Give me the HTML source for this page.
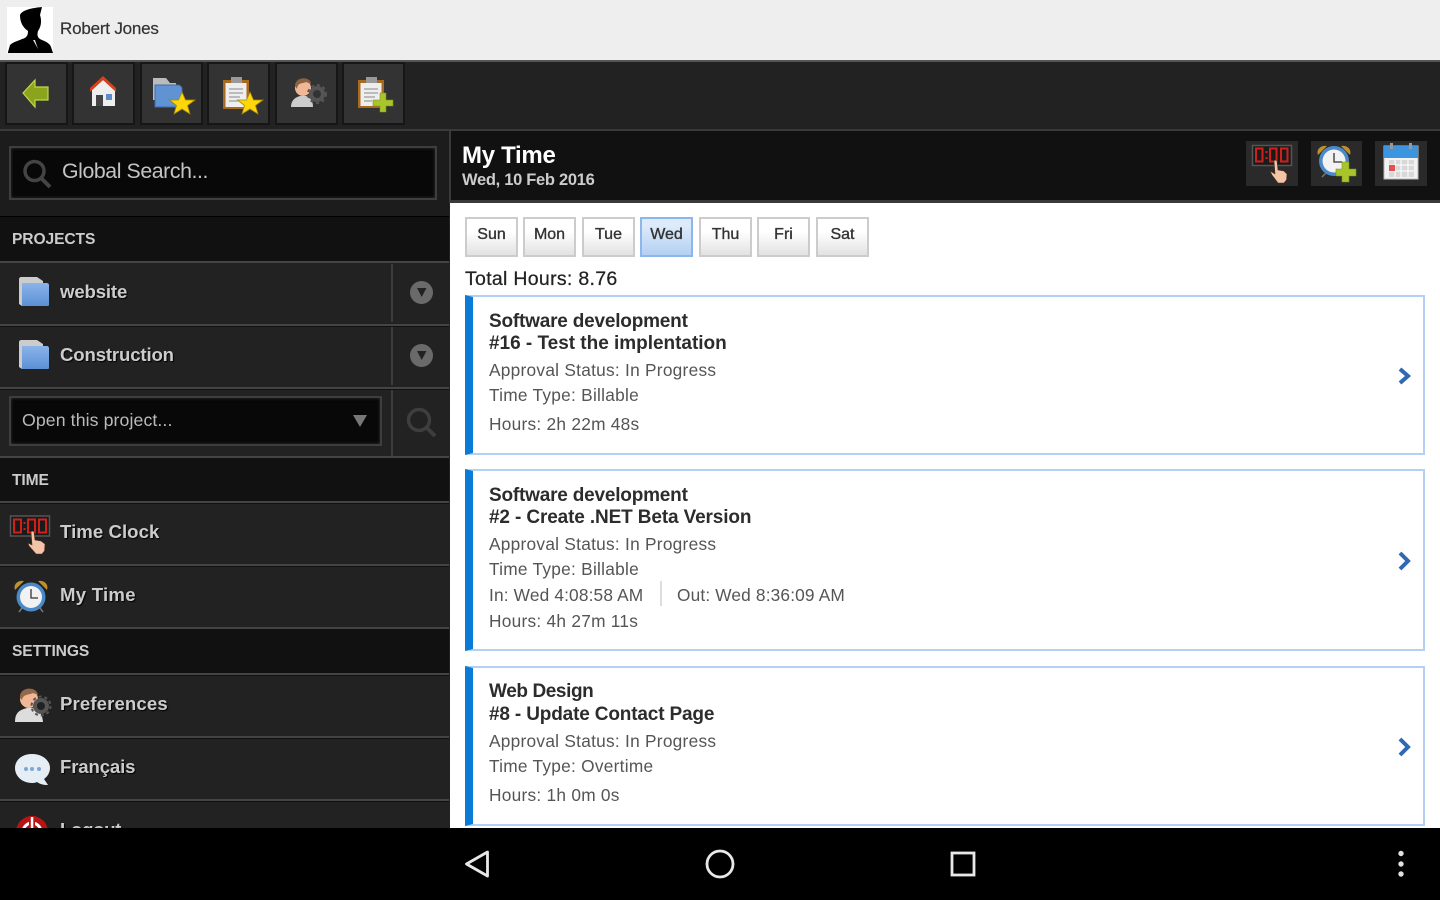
<!DOCTYPE html>
<html><head><meta charset="utf-8"><style>
*{box-sizing:border-box}
html,body{margin:0;padding:0;width:1440px;height:900px;overflow:hidden;background:#000;font-family:"Liberation Sans",sans-serif}
.a{position:absolute}
.t{position:absolute;white-space:nowrap;line-height:1}
.btn{position:absolute;top:62px;width:63px;height:63px;background:#333;border:2px solid #161616}
.lbl{position:absolute;left:60px;color:#ccc;font-weight:bold;font-size:18.6px;line-height:1;white-space:nowrap;text-shadow:1px 1px 1px #000;letter-spacing:-.15px}
.sec{position:absolute;left:12px;color:#ccc;font-weight:bold;font-size:15.6px;line-height:1;white-space:nowrap;letter-spacing:-.1px}
.day{position:absolute;top:217px;width:53px;height:40px;border:2px solid #ccc;background:linear-gradient(#fff 35%,#e2e2e2);text-align:center;font-size:16px;line-height:31px;color:#333;-webkit-text-stroke:.35px #333}
.card{position:absolute;left:465px;width:960px;background:#fff;border:2px solid #b4d0f5;border-left:8px solid #0a7bd6}
.c1{position:absolute;left:489px;font-size:19px;color:#2c2c2c;font-weight:bold;white-space:nowrap;line-height:1;letter-spacing:-.2px}
.c2{position:absolute;left:489px;font-size:17.3px;color:#555;white-space:nowrap;line-height:1;letter-spacing:.26px}
.sep{position:absolute;left:0;width:449px;height:3px;background:linear-gradient(#444 66%,#111 66%)}
.inp{position:absolute;background:#080808;border:2px solid #3e3e3e;box-shadow:inset 0 0 3px #333}
svg{position:absolute;overflow:visible}
</style></head><body>

<div class="a" style="left:0;top:0;width:1440px;height:60px;background:#eee"></div>
<div class="a" style="left:0;top:60px;width:1440px;height:2px;background:#555"></div>
<svg style="left:7px;top:7px" width="46" height="46" viewBox="0 0 46 46"><rect width="46" height="46" fill="#fff"/><path d="M1 45L3 38C6 35 11 34 15 32C19 31 21 29 21 24C15 20 13 14 13 8C15 3 25 1 35 0L33 8C35 14 34 20 31 24C30 28 30 31 35 33C40 35 43 37 44 40L46 46H1Z" fill="#000"/><path d="M26 33L31 42L28 33Z" fill="#ddd"/></svg>
<div class="t" style="left:60px;top:20px;font-size:17px;color:#333;-webkit-text-stroke:.2px #333;letter-spacing:-.2px">Robert Jones</div>

<div class="a" style="left:0;top:62px;width:1440px;height:68px;background:#222"></div>
<div class="a" style="left:0;top:129px;width:1440px;height:2px;background:#3a3a3a"></div>
<div class="btn" style="left:5px"></div><div class="btn" style="left:72px"></div><div class="btn" style="left:140px"></div><div class="btn" style="left:207px"></div><div class="btn" style="left:275px"></div><div class="btn" style="left:342px"></div>

<svg style="left:0;top:0" width="420" height="130">
<path d="M23 93L35 80V87H48V100H35V107Z" fill="#8aa51c" stroke="#c4d64e" stroke-width="1.2"/>
<path d="M92 90V106H115V90L103 80Z" fill="#eee"/><path d="M90 92V88L103 76L116 88V92L103 80Z" fill="#d8401c"/><rect x="96" y="95" width="7" height="11" fill="#444"/><rect x="106" y="94" width="6" height="6" fill="#5e8cc8"/>
<path d="M153 78H166L170 83H176V100H153Z" fill="#bbb"/><path d="M155 85H178C180 85 181 86 182 88V107H155Z" fill="#5f93d3" stroke="#3f6ea8"/>
<path d="M182 92L185.500 100H195L187.500 105.500L190 114L182 109L174 114L176.500 105.500L169.500 100H178.500Z" fill="#ffd60a" stroke="#a08a10" stroke-width=".8"/>
<rect x="223" y="80" width="26" height="29" fill="#a86a1e"/><rect x="225.500" y="83" width="21" height="24" fill="#eee"/><rect x="231" y="77" width="11" height="6" fill="#999"/><path d="M229 89H243M229 93H243M229 97H240M229 101H238" stroke="#aaa" stroke-width="1.500"/>
<path d="M250 92L253.500 100H263L255.500 105.500L258 114L250 109L242 114L244.500 105.500L237.500 100H246.500Z" fill="#ffd60a" stroke="#a08a10" stroke-width=".8"/>
<path d="M291 107C291 99 297 97 300 96H306C310 98 313 100 313 107Z" fill="#ccc"/><circle cx="303" cy="88" r="8" fill="#f0b897"/><path d="M295 86C295 76 311 76 311 84L306 82C302 84 298 82 297 89Z" fill="#8a6244"/>
<circle cx="317" cy="94" r="6" fill="none" stroke="#555" stroke-width="4"/><circle cx="317" cy="94" r="9" fill="none" stroke="#555" stroke-width="2" stroke-dasharray="3 3"/>
<rect x="358" y="80" width="26" height="28" fill="#a86a1e"/><rect x="360.500" y="83" width="21" height="23" fill="#eee"/><rect x="366" y="77" width="11" height="6" fill="#999"/><path d="M364 89H378M364 93H378M364 97H375M364 101H372" stroke="#aaa" stroke-width="1.500"/>
<path d="M380 93H386V100H393V106H386V112H380V106H373V100H380Z" fill="#a8c52c" stroke="#7a9618" stroke-width=".6"/>
</svg>

<!-- sidebar -->
<div class="a" style="left:0;top:131px;width:450px;height:697px;background:#1c1c1c"></div>
<div class="inp" style="left:9px;top:146px;width:428px;height:54px"></div>
<svg style="left:22px;top:159px" width="30" height="30"><circle cx="12.500" cy="12" r="9.500" fill="none" stroke="#444" stroke-width="3.500"/><path d="M19 19L28 28" stroke="#444" stroke-width="4"/></svg>
<div class="t" style="left:62px;top:161px;font-size:21.300px;color:#c4c4c4;letter-spacing:-.42px">Global Search...</div>

<div class="a" style="left:0;top:216px;width:449px;height:46px;background:#111;border-top:1px solid #000"></div>
<div class="sec" style="top:232px">PROJECTS</div>

<div class="a" style="left:0;top:261px;width:449px;height:2px;background:#444"></div>
<div class="a" style="left:0;top:263px;width:449px;height:61px;background:#222"></div>
<div class="sep" style="top:324px"></div>
<div class="a" style="left:0;top:327px;width:449px;height:60px;background:#222"></div>
<div class="sep" style="top:387px"></div>
<div class="a" style="left:0;top:390px;width:449px;height:66px;background:#222"></div>
<div class="sep" style="top:456px"></div>
<div class="a" style="left:391px;top:264px;width:2px;height:58px;background:#3c3c3c"></div>
<div class="a" style="left:391px;top:327px;width:2px;height:58px;background:#3c3c3c"></div>
<div class="a" style="left:391px;top:390px;width:2px;height:66px;background:#3c3c3c"></div>

<svg style="left:0;top:260px" width="450" height="200">
<defs><linearGradient id="fg" x1="0" y1="0" x2="0" y2="1"><stop offset="0" stop-color="#8ab4ea"/><stop offset="1" stop-color="#5c90d4"/></linearGradient></defs>
<path d="M19 19C19 18 20 17 21 17H37L43 21V30H22V46L19 44Z" fill="#ccc"/><path d="M22 23H47C48 23 49 24 49 25V45C49 46 48 46 47 46H22Z" fill="url(#fg)"/>
<path d="M19 82C19 81 20 80 21 80H37L43 84V93H22V109L19 107Z" fill="#ccc"/><path d="M22 86H47C48 86 49 87 49 88V108C49 109 48 109 47 109H22Z" fill="url(#fg)"/>
<circle cx="421.500" cy="32.500" r="11.500" fill="#6a6a6a"/><path d="M417 28H426.500L421.700 37Z" fill="#222"/>
<circle cx="421.500" cy="95.500" r="11.500" fill="#6a6a6a"/><path d="M417 91H426.500L421.700 100Z" fill="#222"/>
</svg>
<div class="lbl" style="top:283px">website</div>
<div class="lbl" style="top:346px">Construction</div>

<div class="inp" style="left:9px;top:396px;width:373px;height:50px"></div>
<div class="t" style="left:22px;top:412px;font-size:17.700px;color:#bbb;letter-spacing:.1px">Open this project...</div>
<svg style="left:352px;top:414px" width="16" height="14"><path d="M1 1H15L8 13Z" fill="#777"/></svg>
<svg style="left:405px;top:406px" width="32" height="32"><circle cx="14" cy="14" r="10.500" fill="none" stroke="#3e3e3e" stroke-width="3.500"/><path d="M21 21L30 30" stroke="#3e3e3e" stroke-width="4"/></svg>

<div class="a" style="left:0;top:459px;width:449px;height:42px;background:#111"></div>
<div class="sec" style="top:473px">TIME</div>
<div class="sep" style="top:501px"></div>
<div class="a" style="left:0;top:504px;width:449px;height:60px;background:#222"></div>
<div class="sep" style="top:564px"></div>
<div class="a" style="left:0;top:567px;width:449px;height:60px;background:#222"></div>
<div class="sep" style="top:627px"></div>
<div class="a" style="left:0;top:630px;width:449px;height:43px;background:#111"></div>
<div class="sec" style="top:644px">SETTINGS</div>
<div class="sep" style="top:673px"></div>
<div class="a" style="left:0;top:676px;width:449px;height:60px;background:#222"></div>
<div class="sep" style="top:736px"></div>
<div class="a" style="left:0;top:739px;width:449px;height:60px;background:#222"></div>
<div class="sep" style="top:799px"></div>
<div class="a" style="left:0;top:802px;width:449px;height:26px;background:#222"></div>

<svg style="left:0;top:0" width="450" height="830">
<rect x="10.500" y="516" width="39" height="20" fill="#1a1a1a" stroke="#555" stroke-width="1.500"/>
<path d="M14 519.500H21V532.500H14ZM28 519.500H35V532.500H28ZM39 519.500H46V532.500H39ZM24.500 522V524M24.500 528V530" fill="none" stroke="#d11f1a" stroke-width="2"/>
<path d="M31 532C31 531 34 531 34 532L35 540L41 541L45 544L44.500 551L42 554H36L29 546L28 543L32 545Z" fill="#f3c4a8" stroke="#4a3020" stroke-width=".6"/>
<path d="M15 590C13 584 18 580 24 581ZM47 590C49 584 44 580 38 581Z" fill="#c0902a"/>
<circle cx="31" cy="597" r="14.500" fill="#4a8ac8"/><circle cx="31" cy="597" r="11" fill="#f2f2f2"/><path d="M31 589V598H38" fill="none" stroke="#333" stroke-width="1.300"/><path d="M19 612L22 608M43 612L40 608" stroke="#777" stroke-width="1.500"/>
<path d="M15 722C15 712 20 710 27 708H33C38 710 42 712 43 722Z" fill="#ddd"/><circle cx="29" cy="699" r="9" fill="#f0b897"/><path d="M20 698C19 686 37 686 38 695L33 693C29 695 23 694 22 700Z" fill="#94694a"/>
<circle cx="41" cy="706" r="6" fill="none" stroke="#555" stroke-width="4"/><circle cx="41" cy="706" r="9.500" fill="none" stroke="#555" stroke-width="2" stroke-dasharray="3 3"/>
<path d="M32 754C42 754 50 760 50 768C50 773 47 777 44 779L48 785C43 785 40 784 37 782C35 783 33 783 32 783C22 783 15 776 15 768C15 760 22 754 32 754Z" fill="#e6eef5"/><circle cx="26" cy="769" r="2" fill="#7aa7d4"/><circle cx="32" cy="769" r="2" fill="#7aa7d4"/><circle cx="39" cy="769" r="2" fill="#7aa7d4"/>
<circle cx="32" cy="832" r="16" fill="#b81414"/><circle cx="32" cy="832" r="9" fill="none" stroke="#fff" stroke-width="3"/><rect x="29" y="816" width="6" height="16" fill="#b81414"/><rect x="30.800" y="817" width="2.500" height="14" fill="#fff"/>
</svg>
<div class="lbl" style="top:523px;letter-spacing:.05px">Time Clock</div>
<div class="lbl" style="top:586px;letter-spacing:.25px">My Time</div>
<div class="lbl" style="top:695px;letter-spacing:.12px">Preferences</div>
<div class="lbl" style="top:758px">Français</div>
<div class="lbl" style="top:821px;letter-spacing:-.3px">Logout</div>

<!-- main header -->
<div class="a" style="left:450px;top:203px;width:990px;height:625px;background:#fff"></div>
<div class="a" style="left:449px;top:131px;width:991px;height:69px;background:#111;border-left:2px solid #3a3a3a"></div>
<div class="a" style="left:449px;top:200px;width:991px;height:3px;background:#3a3a3a"></div>
<div class="a" style="left:449px;top:203px;width:1px;height:625px;background:#222"></div>
<div class="t" style="left:462px;top:144px;font-size:24px;font-weight:bold;color:#fff;letter-spacing:-.3px">My Time</div>
<div class="t" style="left:462px;top:172px;font-size:16.500px;font-weight:bold;color:#ccc;letter-spacing:-.3px">Wed, 10 Feb 2016</div>

<div class="a" style="left:1246px;top:141px;width:52px;height:45px;background:#2a2a2a"></div>
<div class="a" style="left:1311px;top:141px;width:51px;height:45px;background:#2a2a2a"></div>
<div class="a" style="left:1375px;top:141px;width:52px;height:45px;background:#2a2a2a"></div>
<svg style="left:0;top:0" width="1440" height="200">
<rect x="1252.500" y="145.500" width="39" height="20" fill="#1a1a1a" stroke="#555" stroke-width="1.500"/>
<path d="M1256 148.500H1262.500V161.500H1256ZM1270 148.500H1276.500V161.500H1270ZM1281 148.500H1287.500V161.500H1281ZM1266.500 151V153M1266.500 157V159" fill="none" stroke="#d11f1a" stroke-width="2"/>
<path d="M1274 161C1274 160 1277 160 1277 161L1278 170L1284 171L1287 174L1286.500 180L1284 183H1278L1272 175L1270 171L1275 174Z" fill="#f3c4a8" stroke="#4a3020" stroke-width=".6"/>
<path d="M1318 155C1316 149 1321 145 1327 146ZM1350 155C1352 149 1347 145 1341 146Z" fill="#c0902a"/>
<circle cx="1334" cy="161" r="15" fill="#4a8ac8"/><circle cx="1334" cy="161" r="11.500" fill="#f2f2f2"/><path d="M1334 153V162H1342" fill="none" stroke="#333" stroke-width="1.300"/><path d="M1322 177L1326 173" stroke="#777" stroke-width="1.500"/>
<path d="M1342 162H1349V169H1356V176H1349V182H1342V176H1336V169H1342Z" fill="#a8c52c" stroke="#7a9618" stroke-width=".6"/>
<rect x="1384" y="146" width="34" height="33" fill="#f2f2f2" stroke="#bbb"/><rect x="1384" y="146" width="34" height="12" fill="#3d95e0"/>
<path d="M1389 160H1414V177H1389Z" fill="#d8d8d8"/><path d="M1395 160V177M1401 160V177M1408 160V177M1389 165H1414M1389 171H1414" stroke="#fff" stroke-width="1"/><rect x="1389" y="165" width="6" height="6" fill="#e05050"/>
<rect x="1390" y="143" width="3" height="6" fill="#999"/><rect x="1409" y="143" width="3" height="6" fill="#999"/>
</svg>

<!-- days -->
<div class="day" style="left:465px">Sun</div>
<div class="day" style="left:523px">Mon</div>
<div class="day" style="left:582px">Tue</div>
<div class="day" style="left:640px;border-color:#8cb6ec;background:linear-gradient(#dceafa 20%,#b4d0f2)">Wed</div>
<div class="day" style="left:699px">Thu</div>
<div class="day" style="left:757px">Fri</div>
<div class="day" style="left:816px">Sat</div>
<div class="t" style="left:465px;top:270px;font-size:19.500px;color:#222;-webkit-text-stroke:.25px #222;letter-spacing:.3px">Total Hours: 8.76</div>

<!-- cards -->
<div class="card" style="top:295px;height:160px"></div>
<div class="c1" style="top:312px">Software development</div>
<div class="c1" style="top:334px;letter-spacing:-.02px">#16 - Test the implentation</div>
<div class="c2" style="top:362px">Approval Status: In Progress</div>
<div class="c2" style="top:387px">Time Type: Billable</div>
<div class="c2" style="top:416px">Hours: 2h 22m 48s</div>

<div class="card" style="top:469px;height:182px"></div>
<div class="c1" style="top:486px">Software development</div>
<div class="c1" style="top:508px;letter-spacing:-.13px">#2 - Create .NET Beta Version</div>
<div class="c2" style="top:536px">Approval Status: In Progress</div>
<div class="c2" style="top:561px">Time Type: Billable</div>
<div class="c2" style="top:587px;letter-spacing:.16px">In: Wed 4:08:58 AM</div>
<div class="a" style="left:660px;top:581px;width:2px;height:25px;background:#ddd"></div>
<div class="c2" style="left:677px;top:587px;letter-spacing:.16px">Out: Wed 8:36:09 AM</div>
<div class="c2" style="top:613px">Hours: 4h 27m 11s</div>

<div class="card" style="top:666px;height:160px"></div>
<div class="c1" style="top:682px;letter-spacing:-.4px">Web Design</div>
<div class="c1" style="top:705px;letter-spacing:-.16px">#8 - Update Contact Page</div>
<div class="c2" style="top:733px">Approval Status: In Progress</div>
<div class="c2" style="top:758px">Time Type: Overtime</div>
<div class="c2" style="top:787px">Hours: 1h 0m 0s</div>

<svg style="left:0;top:0" width="1440" height="830">
<path d="M1400 369L1408 376L1400 383M1400 553L1408 561L1400 569M1400 739L1408 747L1400 755" fill="none" stroke="#2f68b4" stroke-width="4"/>
</svg>

<!-- nav -->
<div class="a" style="left:0;top:828px;width:1440px;height:72px;background:#000"></div>
<svg style="left:0;top:828px" width="1440" height="72">
<path d="M487.500 24L466.500 36L487.500 48Z" fill="none" stroke="#e8e8e8" stroke-width="2.800" stroke-linejoin="round"/>
<circle cx="720" cy="36" r="13" fill="none" stroke="#e8e8e8" stroke-width="2.800"/>
<rect x="952" y="25" width="22" height="22" fill="none" stroke="#e8e8e8" stroke-width="2.800"/>
<circle cx="1401" cy="25.500" r="2.700" fill="#e0e0e0"/><circle cx="1401" cy="36" r="2.700" fill="#e0e0e0"/><circle cx="1401" cy="46" r="2.700" fill="#e0e0e0"/>
</svg>
</body></html>
